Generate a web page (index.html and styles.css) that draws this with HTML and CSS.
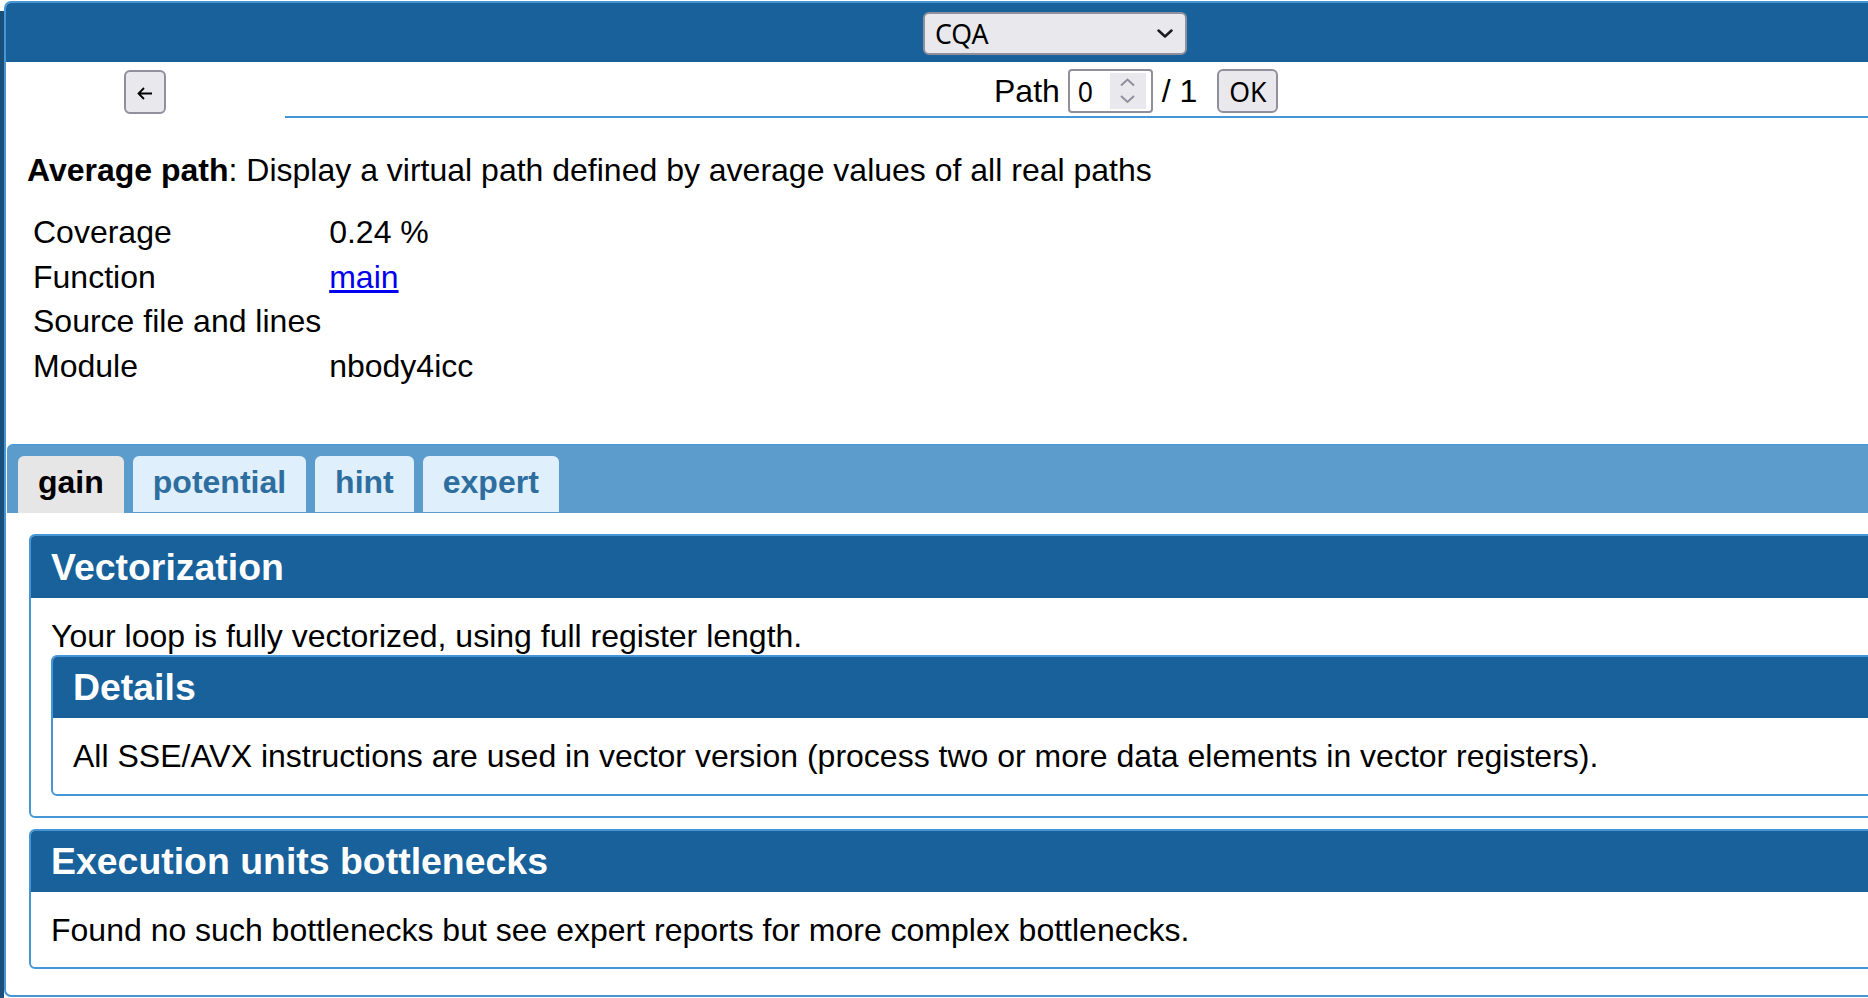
FILE: index.html
```html
<!DOCTYPE html>
<html lang="en">
<head>
<meta charset="utf-8">
<title>CQA - Average path</title>
<link rel="stylesheet" href="styles.css">
</head>
<body>
<div class="page">
  <div class="edge"></div>
  <div class="app">
    <header class="topbar">
      <div class="select-wrap">
        <select class="mode"><option>CQA</option></select>
        <svg class="chev" viewBox="0 0 16 9" width="16" height="9"><polyline points="1.5,1.5 8,7.5 14.5,1.5" fill="none" stroke="#1c1b22" stroke-width="2.5" stroke-linecap="round" stroke-linejoin="round"/></svg>
      </div>
    </header>
    <div class="nav">
      <div class="nav-left">
        <button class="back" type="button" aria-label="Back"><svg viewBox="0 0 16 13" width="16" height="13"><path d="M15 6.5H1.5M7 1L1.5 6.5L7 12" fill="none" stroke="#000" stroke-width="1.8"/></svg></button>
      </div>
      <div class="nav-right">
        <span class="path-label">Path</span>
        <div class="numbox">
          <input class="num" type="text" value="0">
          <span class="spin"><svg viewBox="0 0 36 36" width="36" height="36"><polyline points="11,12.5 17.5,6.5 24,12.5" fill="none" stroke="#8f8f9d" stroke-width="2"/><polyline points="11,23 17.5,29 24,23" fill="none" stroke="#8f8f9d" stroke-width="2"/></svg></span>
        </div>
        <span class="path-total">/ 1</span>
        <button class="ok" type="button">OK</button>
      </div>
    </div>
    <div class="info">
      <p class="desc"><b>Average path</b>: Display a virtual path defined by average values of all real paths</p>
      <table class="meta">
        <tr><td>Coverage</td><td>0.24 %</td></tr>
        <tr><td>Function</td><td><a class="link" href="#">main</a></td></tr>
        <tr><td>Source file and lines</td><td></td></tr>
        <tr><td>Module</td><td>nbody4icc</td></tr>
      </table>
    </div>
    <div class="tabs">
      <ul class="tab-nav">
        <li class="tab active">gain</li>
        <li class="tab">potential</li>
        <li class="tab">hint</li>
        <li class="tab">expert</li>
      </ul>
      <div class="tab-panel">
        <section class="box">
          <h3 class="box-title">Vectorization</h3>
          <div class="box-body">
            <div class="line">Your loop is fully vectorized, using full register length.</div>
            <section class="box sub">
              <h3 class="box-title">Details</h3>
              <div class="box-body">
                <div class="line">All SSE/AVX instructions are used in vector version (process two or more data elements in vector registers).</div>
              </div>
            </section>
          </div>
        </section>
        <section class="box exec">
          <h3 class="box-title">Execution units bottlenecks</h3>
          <div class="box-body">
            <div class="line">Found no such bottlenecks but see expert reports for more complex bottlenecks.</div>
          </div>
        </section>
      </div>
    </div>
  </div>
</div>
</body>
</html>
```

FILE: styles.css
```css
html {
  overflow: hidden;
}
body {
  margin: 0;
  font-family: "Liberation Sans", Arial, sans-serif;
  font-size: 32px;
  line-height: 1.15;
  color: #000;
  background: #fff;
}
.page {
  display: flex;
  align-items: flex-start;
}
.edge {
  flex: none;
  width: 4px;
  height: 987px;
  margin-top: 11px;
  background: #1b4f7b;
}
.app {
  flex: none;
  width: 2102px;
  height: 996px;
  margin-top: 1px;
  box-sizing: border-box;
  border: 2px solid #4596d6;
  border-radius: 7px;
  overflow: hidden;
  background: #fff;
}
.topbar {
  height: 59px;
  box-sizing: border-box;
  padding-top: 2px;
  background: #18619b;
  display: flex;
  align-items: center;
  justify-content: center;
}
.select-wrap {
  position: relative;
  width: 264px;
  height: 43px;
}
.mode {
  appearance: none;
  -webkit-appearance: none;
  width: 100%;
  height: 100%;
  box-sizing: border-box;
  margin: 0;
  padding: 0 0 0 10px;
  border: 2px solid #8f8f9d;
  border-radius: 6px;
  background: #e9e9ed;
  color: #000;
  font-family: "Noto Sans", sans-serif;
  font-size: 26.67px;
}
.chev {
  position: absolute;
  right: 14px;
  top: 17px;
  pointer-events: none;
}
.nav {
  display: flex;
  height: 56px;
}
.nav-left {
  flex: none;
  width: 279px;
}
.back {
  margin: 8px 0 0 118px;
  width: 42px;
  height: 44px;
  box-sizing: border-box;
  padding: 3px 0 0;
  border: 2px solid #8f8f9d;
  border-radius: 6px;
  background: #e9e9ed;
  display: flex;
  align-items: center;
  justify-content: center;
}
.nav-right {
  flex: 1;
  height: 56px;
  box-sizing: border-box;
  padding: 4px 0 0 709px;
  border-bottom: 2px solid #4596d6;
  display: flex;
  align-items: center;
}
.path-label {
  margin-right: 8px;
}
.numbox {
  flex: none;
  width: 85px;
  height: 44px;
  box-sizing: border-box;
  padding: 0 5px 0 8px;
  border: 2px solid #8f8f9d;
  border-radius: 4px;
  display: flex;
  align-items: center;
  background: #fff;
}
.num {
  flex: 1;
  min-width: 0;
  border: 0;
  padding: 0;
  margin: 0;
  outline: none;
  background: transparent;
  color: #000;
  font-family: "Noto Sans", sans-serif;
  font-size: 26.67px;
}
.spin {
  flex: none;
  width: 36px;
  height: 36px;
  background: #e9e9ed;
  display: flex;
}
.path-total {
  margin-left: 9px;
}
.ok {
  flex: none;
  margin-left: 20px;
  width: 61px;
  height: 44px;
  box-sizing: border-box;
  padding: 0;
  border: 2px solid #8f8f9d;
  border-radius: 6px;
  background: #e9e9ed;
  color: #000;
  font-family: "Noto Sans", sans-serif;
  font-size: 26.67px;
}
.info {
  padding: 34px 21px 0;
}
.desc {
  margin: 0 0 19px;
}
.meta {
  border-collapse: separate;
  border-spacing: 4px;
  font-size: 32px;
}
.meta td {
  padding: 2px;
  vertical-align: top;
}
.link {
  color: #0000ee;
  text-decoration: underline;
}
.tabs {
  margin: 53px 1px 0;
}
.tab-nav {
  list-style: none;
  margin: 0;
  height: 69px;
  box-sizing: border-box;
  padding: 11px 0 0 11px;
  border-top: 1px solid #4297d7;
  border-radius: 6px 6px 0 0;
  background: #5c9ccc;
  display: flex;
  gap: 9px;
}
.tab {
  padding: 8px 20px 0;
  margin-bottom: 1px;
  border-radius: 6px 6px 0 0;
  background: #dfeffc;
  color: #2e6e9e;
  font-weight: bold;
}
.tab.active {
  margin-bottom: 0;
  background: #e6e6e6;
  color: #000;
}
.tab-panel {
  padding: 21px 22px 0;
}
.box {
  border: 2px solid #4596d6;
  border-radius: 6px;
  overflow: hidden;
  background: #fff;
}
.box + .box {
  margin-top: 11px;
}
.box-title {
  margin: 0;
  height: 62px;
  line-height: 62px;
  padding-left: 20px;
  background: #18619b;
  color: #fff;
  font-size: 37.44px;
  font-weight: bold;
}
.sub .box-title,
.exec .box-title {
  height: 61px;
  line-height: 61px;
}
.box-body {
  padding: 20px 20px 20px;
}
.sub .box-body,
.exec .box-body {
  padding-bottom: 19px;
}
.line {
  white-space: nowrap;
}
```
